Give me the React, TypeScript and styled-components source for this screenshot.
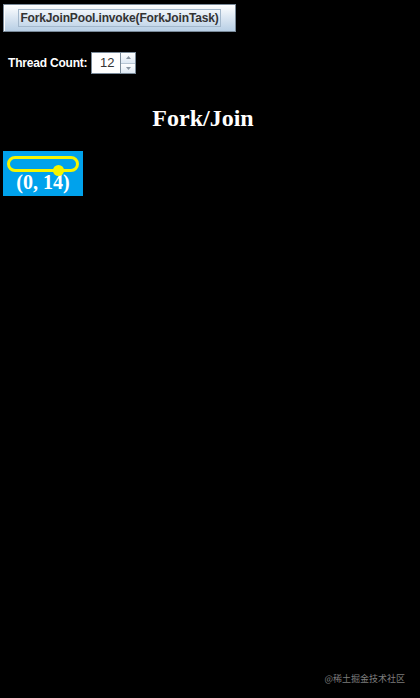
import React from "react";
import styled, { createGlobalStyle } from "styled-components";

const GlobalStyle = createGlobalStyle`
  html, body {
    margin: 0;
    padding: 0;
    background: #000;
  }
  body {
    width: 420px;
    height: 698px;
    overflow: hidden;
    font-family: "Liberation Sans", Arial, sans-serif;
  }
`;

export default function App() {
  return (
    <Page>
      <GlobalStyle />
      <ToolBar>
        <InvokeButton>
          <FocusRing>ForkJoinPool.invoke(ForkJoinTask)</FocusRing>
        </InvokeButton>
      </ToolBar>
      <ControlRow>
        <Label>Thread Count:</Label>
        <Spinner>
          <SpinnerField>12</SpinnerField>
          <SpinnerArrows>
            <ArrowButton>
              <svg width="5" height="3" viewBox="0 0 5 3">
                <path d="M0 3 L2.5 0 L5 3 Z" fill="#8a96a3" />
              </svg>
            </ArrowButton>
            <ArrowButton>
              <svg width="5" height="3" viewBox="0 0 5 3">
                <path d="M0 0 L2.5 3 L5 0 Z" fill="#8a96a3" />
              </svg>
            </ArrowButton>
          </SpinnerArrows>
        </Spinner>
      </ControlRow>
      <Title>Fork/Join</Title>
      <TaskBox>
        <Track>
          <Dot />
        </Track>
        <Range>(0, 14)</Range>
      </TaskBox>
      <Watermark>@稀土掘金技术社区</Watermark>
    </Page>
  );
}

const Page = styled.div`
  position: relative;
  width: 420px;
  height: 698px;
  background: #000;
  display: flex;
  flex-direction: column;
`;

const ToolBar = styled.div`
  padding: 4px 0 0 3px;
  display: flex;
`;

const InvokeButton = styled.div`
  width: 233px;
  height: 28px;
  box-sizing: border-box;
  border: 1px solid #7a8a99;
  background: linear-gradient(to bottom, #ffffff 0%, #dde8f3 45%, #b8cfe5 100%);
  display: flex;
  align-items: center;
  justify-content: center;
  box-shadow: inset 1px 1px 0 #ffffff;
`;

const FocusRing = styled.span`
  padding: 1px 1px;
  border: 1px solid #a3b8cc;
  font-size: 12px;
  font-weight: bold;
  color: #333;
  line-height: 14px;
  letter-spacing: -0.15px;
`;

const ControlRow = styled.div`
  margin-top: 20px;
  padding-left: 8px;
  display: flex;
  align-items: center;
  gap: 4px;
`;

const Label = styled.span`
  color: #fff;
  font-size: 12px;
  font-weight: bold;
  letter-spacing: -0.2px;
`;

const Spinner = styled.div`
  display: flex;
  height: 22px;
`;

const SpinnerField = styled.div`
  width: 29px;
  box-sizing: border-box;
  background: #fff;
  border: 1px solid #7a8a99;
  border-right: none;
  font-size: 13px;
  color: #333;
  text-align: right;
  padding-right: 6px;
  line-height: 20px;
`;

const SpinnerArrows = styled.div`
  width: 16px;
  display: flex;
  flex-direction: column;
  border: 1px solid #7a8a99;
  box-sizing: border-box;
`;

const ArrowButton = styled.div`
  flex: 1;
  display: flex;
  align-items: center;
  justify-content: center;
  background: linear-gradient(to bottom, #ffffff, #dde8f3);
  & + & {
    border-top: 1px solid #b8c6d4;
  }
`;

const Title = styled.div`
  margin-top: 30px;
  text-align: center;
  padding-right: 14px;
  color: #fff;
  font-family: "Liberation Serif", "Times New Roman", serif;
  font-weight: bold;
  font-size: 24px;
  line-height: 28px;
`;

const TaskBox = styled.div`
  margin: 19px 0 0 3px;
  width: 80px;
  height: 45px;
  box-sizing: border-box;
  background: #00a2ec;
  padding: 5px 4px 0 4px;
  display: flex;
  flex-direction: column;
  align-items: center;
`;

const Track = styled.div`
  position: relative;
  align-self: stretch;
  height: 16px;
  box-sizing: border-box;
  border: 3px solid #f5f500;
  border-radius: 8px;
`;

const Dot = styled.div`
  position: absolute;
  left: 43px;
  top: 6px;
  width: 11px;
  height: 11px;
  border-radius: 50%;
  background: #f5f500;
`;

const Range = styled.div`
  margin-top: -1px;
  color: #fff;
  font-family: "Liberation Serif", "Times New Roman", serif;
  font-weight: bold;
  font-size: 20px;
  line-height: 22px;
`;

const Watermark = styled.div`
  position: absolute;
  right: 15px;
  bottom: 13px;
  color: #7d7d7d;
  font-size: 9px;
  font-family: "Noto Sans CJK SC", sans-serif;
`;
